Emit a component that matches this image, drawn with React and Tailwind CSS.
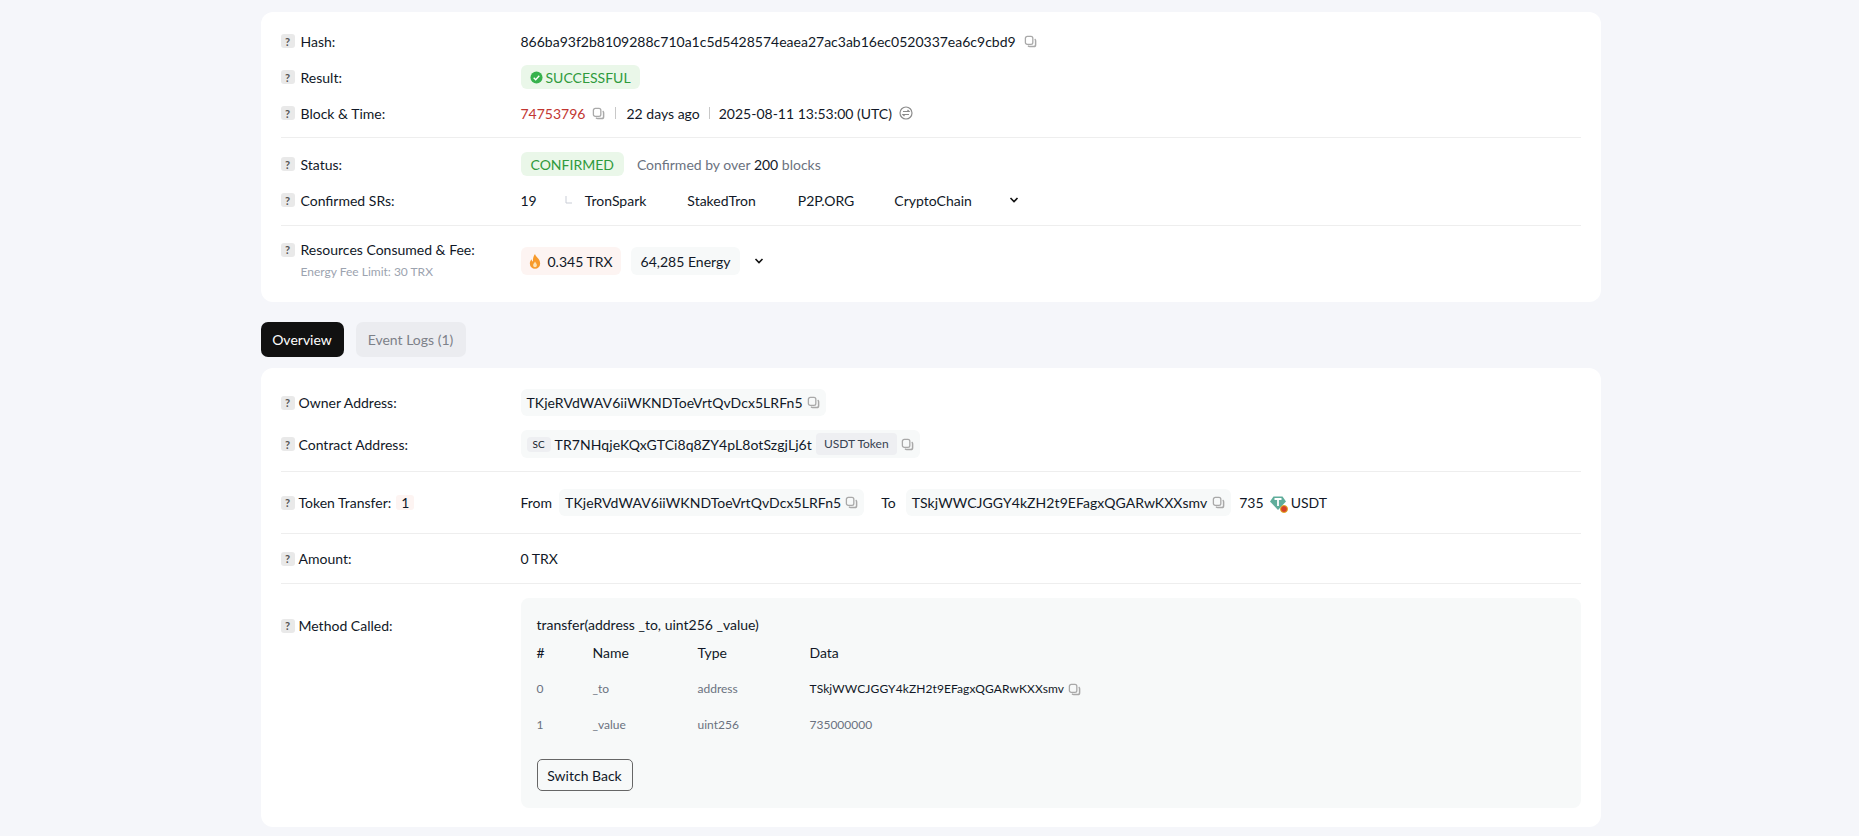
import React from "react";

const Help = ({ className = "" }) => (
  <span className={"flex h-[14px] w-[14px] shrink-0 items-center justify-center rounded-[3px] bg-[#e9e9e9] text-[11px] font-bold leading-none text-[#555] " + className}>?</span>
);

const Copy = ({ className = "" }) => (
  <svg viewBox="0 0 14 14" className={"h-[13px] w-[13px] shrink-0 " + className} fill="none" stroke="#a9a9a9">
    <rect x="1.5" y="1.5" width="8" height="8.5" rx="2" strokeWidth="1.4" />
    <path d="M11.5 4.5c.7.4 1 1 1 1.8v4.2c0 1.2-.9 2-2 2H6.2c-.8 0-1.4-.3-1.8-1" strokeWidth="1.6" />
  </svg>
);

const Chevron = ({ className = "" }) => (
  <svg viewBox="0 0 10 8" className={"h-[8px] w-[10px] " + className} fill="none" stroke="#111" strokeWidth="1.6">
    <path d="M1.5 2l3.5 3.5L8.5 2" />
  </svg>
);

const Label = ({ children, gap = "gap-[6px]" }) => (
  <div className={"flex w-[240px] shrink-0 items-center " + gap}>{children}</div>
);

const Row = ({ label, className = "", children, gap }) => (
  <div className={"flex items-center " + className}>
    <Label gap={gap}>
      <Help />
      <span>{label}</span>
    </Label>
    <div className="flex min-w-0 flex-1 items-center">{children}</div>
  </div>
);

const Divider = ({ className = "" }) => <div className={"h-px bg-[#eeeeee] " + className} />;

const Chip = ({ children, className = "" }) => (
  <span className={"flex items-center rounded-[6px] bg-[#f7f9f9] " + className}>{children}</span>
);

export default function App() {
  return (
    <div className="h-[836px] overflow-hidden bg-[#f5f6fa] font-['Lato','Liberation_Sans',sans-serif] text-[14px] text-[#111827]">
      <div className="w-[1340px] pt-[12px] [margin-left:260.5px]">
        <section className="h-[290px] rounded-[12px] bg-white px-5 pt-[11px]">
          <Row label="Hash:" className="h-[36px]">
            <span>866ba93f2b8109288c710a1c5d5428574eaea27ac3ab16ec0520337ea6c9cbd9</span>
            <Copy className="ml-2" />
          </Row>
          <Row label="Result:" className="h-[36px]">
            <span className="flex h-[24px] items-center gap-[3px] rounded-[6px] bg-[#eaf7e9] px-[9px] text-[#2f9a3c]">
              <svg viewBox="0 0 14 14" className="h-[13px] w-[13px]">
                <circle cx="7" cy="7" r="6.5" fill="#37b24d" />
                <path d="M4 7.2l2.1 2.1L10 5.2" fill="none" stroke="#fff" strokeWidth="1.5" />
              </svg>
              SUCCESSFUL
            </span>
          </Row>
          <Row label="Block & Time:" className="h-[36px]">
            <span className="text-[#c23631]">74753796</span>
            <Copy className="ml-[7px]" />
            <span className="mx-[10px] h-[12px] w-px bg-[#c8c8c8]" />
            <span>22 days ago</span>
            <span className="mx-[9px] h-[12px] w-px bg-[#c8c8c8]" />
            <span>2025-08-11 13:53:00 (UTC)</span>
            <svg viewBox="0 0 14 14" className="ml-[7px] h-[14px] w-[14px]" fill="none" stroke="#8c8c8c" strokeWidth="1.2">
              <circle cx="7" cy="7" r="6" />
              <path d="M4 5.500h6L8.500 4M10 8.500H4L5.500 10" />
            </svg>
          </Row>
          <Divider className="mt-[6px]" />
          <Row label="Status:" className="mt-[8px] h-[36px]">
            <span className="flex h-[24px] items-center rounded-[6px] bg-[#eaf7e9] px-[10px] text-[#2f9a3c]">CONFIRMED</span>
            <span className="ml-[13px] text-[#6b7280]">
              Confirmed by over <span className="text-[#111827]">200</span> blocks
            </span>
          </Row>
          <Row label="Confirmed SRs:" className="h-[36px]">
            <span>19</span>
            <svg viewBox="0 0 8 8" className="ml-[28px] h-[8px] w-[8px]" fill="none" stroke="#c9cdd6">
              <path d="M1 0v7h6" />
            </svg>
            <span className="ml-[12px]">TronSpark</span>
            <span className="ml-[41px]">StakedTron</span>
            <span className="ml-[42px]">P2P.ORG</span>
            <span className="ml-[40px]">CryptoChain</span>
            <Chevron className="ml-[37px]" />
          </Row>
          <Divider className="mt-[7px]" />
          <div className="mt-[11px] flex">
            <div className="w-[240px] shrink-0 pt-[2px]">
              <div className="flex items-center gap-[6px]">
                <Help />
                <span>Resources Consumed & Fee:</span>
              </div>
              <div className="ml-[20px] mt-[3px] text-[12px] leading-[17px] text-[#9ca3af]">Energy Fee Limit: 30 TRX</div>
            </div>
            <div className="flex items-center pt-[5px]">
              <span className="flex h-[28px] items-center gap-[7px] rounded-[6px] bg-[#fdf4f2] px-[8px]">
                <svg viewBox="0 0 12 16" className="h-[15px] w-[12px]">
                  <path d="M6 0c.5 2.800 5.500 5 5.500 10A5.400 5.600 0 0 1 .5 10c0-2.200 1-3.500 2-4.500 0 1.500.5 2.300 1.300 2.500C3.500 5 4.500 2 6 0z" fill="#f79a2b" />
                  <path d="M6 8c.5 1.300 2 2.200 2 4a2 2.200 0 0 1-4 0c0-1.700 1.500-2.500 2-4z" fill="#fde3b5" />
                </svg>
                0.345 TRX
              </span>
              <Chip className="ml-[10px] h-[28px] px-[10px]">64,285 Energy</Chip>
              <Chevron className="ml-[14px]" />
            </div>
          </div>
        </section>

        <nav className="mt-[20px] flex gap-[12px]">
          <span className="flex h-[35px] w-[83px] items-center justify-center rounded-[7px] bg-[#111111] text-white">Overview</span>
          <span className="flex h-[35px] w-[110px] items-center justify-center rounded-[7px] bg-[#ebecf0] text-[#7d8189]">Event Logs (1)</span>
        </nav>

        <section className="mt-[11px] h-[459px] rounded-[12px] bg-white px-5 pt-[21px]">
          <Row label="Owner Address:" gap="gap-[4px]" className="h-[27px]">
            <Chip className="h-[27px] px-[6px] tracking-[0.07px]">
              TKjeRVdWAV6iiWKNDToeVrtQvDcx5LRFn5
              <Copy className="ml-[4px]" />
            </Chip>
          </Row>
          <Row label="Contract Address:" gap="gap-[4px]" className="mt-[14px] h-[28px]">
            <Chip className="h-[28px] px-[6px]">
              <span className="flex h-[15px] items-center rounded-[4px] bg-[#eeeff2] px-[6px] text-[10px]">SC</span>
              <span className="ml-[4px] tracking-[0.07px]">TR7NHqjeKQxGTCi8q8ZY4pL8otSzgjLj6t</span>
              <span className="ml-[4px] flex h-[22px] items-center rounded-[4px] bg-[#eeeff2] px-[8px] text-[12px] text-[#374151]">USDT Token</span>
              <Copy className="ml-[4px]" />
            </Chip>
          </Row>
          <Divider className="mt-[13px]" />
          <Row label={<span className="flex items-center">Token Transfer:<span className="ml-[5px] flex h-[15px] items-center rounded-[3px] bg-[#fdf4f2] px-[5px]">1</span></span>} gap="gap-[4px]" className="mt-[17px] h-[27px]">
            <span>From</span>
            <Chip className="ml-[7px] h-[27px] px-[6px] tracking-[0.07px]">
              TKjeRVdWAV6iiWKNDToeVrtQvDcx5LRFn5
              <Copy className="ml-[4px]" />
            </Chip>
            <span className="ml-[17px]">To</span>
            <Chip className="ml-[10px] h-[27px] px-[6px] tracking-[0.07px]">
              TSkjWWCJGGY4kZH2t9EFagxQGARwKXXsmv
              <Copy className="ml-[5px]" />
            </Chip>
            <span className="ml-[8px]">735</span>
            <span className="relative ml-[6px] mr-[5px] h-[16px] w-[16px]">
              <svg viewBox="0 0 16 16" className="h-[16px] w-[16px]">
                <path d="M3.500 1.500h9L16 6.500 8 15 0 6.500z" fill="#5fad9b" />
                <path d="M4.500 4h7M8 4v7" stroke="#fff" strokeWidth="1.800" fill="none" />
              </svg>
              <span className="absolute bottom-[-2px] right-[-2px] h-[8px] w-[8px] rounded-full border border-[#e0b020] bg-[#d5402b]" />
            </span>
            <span>USDT</span>
          </Row>
          <Divider className="mt-[17px]" />
          <Row label="Amount:" gap="gap-[4px]" className="mt-[11px] h-[27px]">
            0 TRX
          </Row>
          <Divider className="mt-[11px]" />
          <div className="mt-[14px] flex">
            <Label gap="gap-[4px]">
              <div className="flex items-center gap-[4px] self-start pt-[17px]">
                <Help />
                <span>Method Called:</span>
              </div>
            </Label>
            <div className="h-[210px] flex-1 rounded-[8px] bg-[#f7f9f9] px-4 pt-[17px] text-[14px]">
              <div className="leading-[20px]">transfer(address _to, uint256 _value)</div>
              <div className="mt-[8px] grid grid-cols-[56px_105px_112px_1fr] leading-[20px]">
                <span>#</span>
                <span>Name</span>
                <span>Type</span>
                <span>Data</span>
              </div>
              <div className="mt-[16px] grid grid-cols-[56px_105px_112px_1fr] items-center text-[12px] leading-[20px] text-[#6b7280]">
                <span>0</span>
                <span>_to</span>
                <span>address</span>
                <span className="flex items-center tracking-[0.1px] text-[#111827]">
                  TSkjWWCJGGY4kZH2t9EFagxQGARwKXXsmv
                  <Copy className="ml-[4px]" />
                </span>
              </div>
              <div className="mt-[16px] grid grid-cols-[56px_105px_112px_1fr] text-[12px] leading-[20px] text-[#6b7280]">
                <span>1</span>
                <span>_value</span>
                <span>uint256</span>
                <span>735000000</span>
              </div>
              <button className="mt-[24px] flex h-[32px] w-[96px] items-center justify-center rounded-[5px] border border-[#666] text-[14px] text-[#111827]">
                Switch Back
              </button>
            </div>
          </div>
        </section>
      </div>
    </div>
  );
}
